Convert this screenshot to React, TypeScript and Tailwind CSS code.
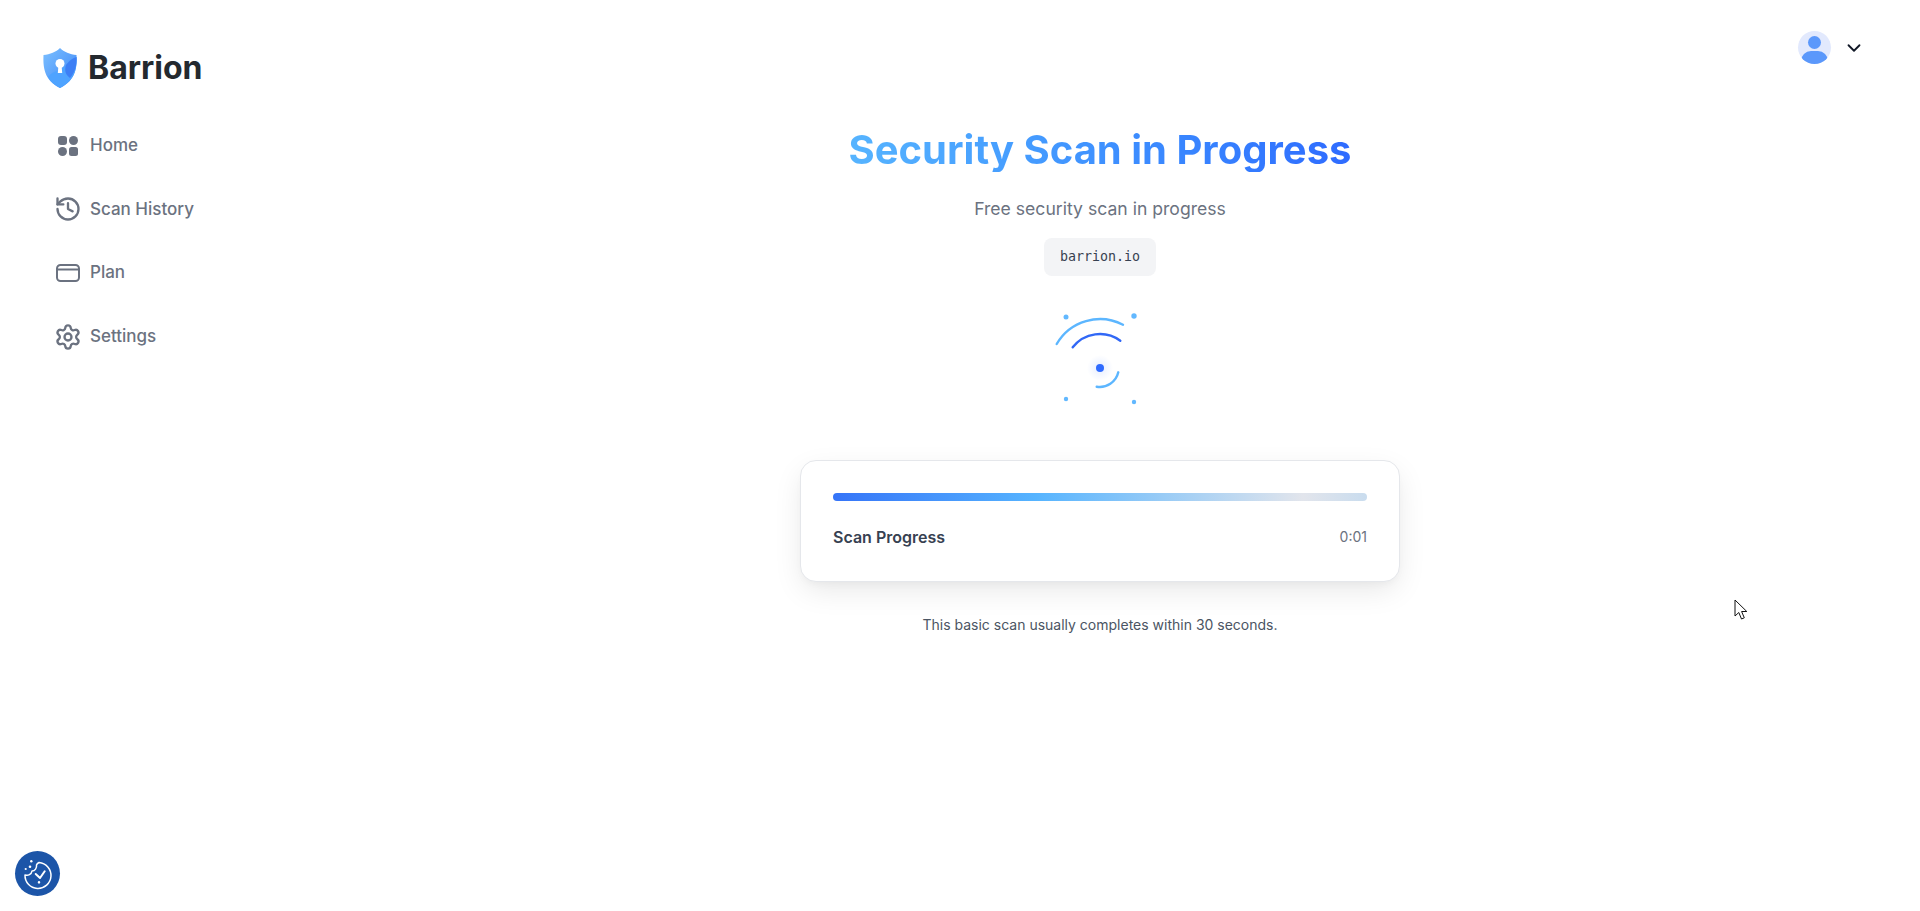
import { ChevronDown, History, Settings } from "lucide-react";

function ShieldLogo() {
    return (
        <svg width="36" height="42" viewBox="0 0 36 42" className="shrink-0">
            <defs>
                <linearGradient id="shieldFill" x1="0" y1="0" x2="1" y2="1">
                    <stop offset="0" stopColor="#7cc0ff" />
                    <stop offset="1" stopColor="#3d86f7" />
                </linearGradient>
            </defs>
            <path
                d="M18 1C14 5 8 7.5 1.5 8 1 20 2 33 18 41 34 33 35 20 34.500 8 28 7.500 22 5 18 1Z"
                fill="url(#shieldFill)"
            />
            <path d="M6 30C12 22 18 26 24 18 28 13 31 11 34.500 10 35 20 34 33 18 41 12 38 8 34 6 30Z" fill="#4ea3ff" />
            <path d="M24 18C28 13 31 11 34.500 10 35 18 33 25 28 31 24 28 22 24 24 18Z" fill="#3d7ff5" />
            <circle cx="18" cy="16.500" r="4.500" fill="#fff" />
            <path d="M16.500 18H19.500L20.200 26H15.800Z" fill="#fff" />
        </svg>
    );
}

function HomeIcon() {
    return (
        <svg width="28" height="28" viewBox="0 0 28 28" fill="#6b7280">
            <rect x="4" y="4" width="9" height="9" rx="3" />
            <circle cx="19.500" cy="8.500" r="4.500" />
            <circle cx="8.500" cy="19.500" r="4.500" />
            <rect x="15" y="15" width="9" height="9" rx="2.500" />
        </svg>
    );
}

function CardIcon() {
    return (
        <svg width="28" height="28" viewBox="0 0 28 28" fill="none" stroke="#6b7280" strokeWidth="2">
            <rect x="3" y="6" width="22" height="16" rx="3.500" />
            <path d="M3 10.500H25" />
        </svg>
    );
}

function ScanAnimation() {
    return (
        <svg width="100" height="100" viewBox="0 0 100 100" fill="none" strokeLinecap="round" className="mt-[34px]">
            <defs>
                <radialGradient id="dotGlow">
                    <stop offset="0" stopColor="#2f6bff" stopOpacity="0.12" />
                    <stop offset="1" stopColor="#2f6bff" stopOpacity="0" />
                </radialGradient>
            </defs>
            <circle cx="16" cy="7" r="2.500" fill="#62b8ff" />
            <circle cx="84" cy="6" r="2.700" fill="#62b8ff" />
            <circle cx="16" cy="89" r="2.200" fill="#62b8ff" />
            <circle cx="84" cy="92" r="2.200" fill="#62b8ff" />
            <path d="M6.700 34A50 50 0 0 1 73 14.700" stroke="#5cb6ff" strokeWidth="2.400" />
            <path d="M22.700 37.300A34.500 34.500 0 0 1 70.300 30.700" stroke="#3168f6" strokeWidth="2.400" />
            <path d="M68.300 62.300A19 19 0 0 1 46.700 76.700" stroke="#5cb6ff" strokeWidth="2.400" />
            <circle cx="50" cy="58" r="13" fill="url(#dotGlow)" />
            <circle cx="50" cy="58" r="4" fill="#2f6bff" />
        </svg>
    );
}

function CookieBadge() {
    return (
        <div className="absolute left-[15px] bottom-[15px] w-[45px] h-[45px] rounded-full bg-[#1c55a8] flex items-center justify-center">
            <svg width="32" height="32" viewBox="0 0 32 32" fill="none" stroke="#fff" strokeWidth="1.500" strokeLinecap="round" strokeLinejoin="round">
                <path d="M17 4.500A13 13 0 1 1 3 17C6 18 9.500 16.500 10 13 13 13 15 10 14.500 7 15 5.500 16 5 17 4.500Z" />
                <path d="M13.700 16L18 20 22.700 13.300" strokeWidth="2" />
                <path d="M17 24.300V24.400" strokeWidth="2.400" />
                <circle cx="9.300" cy="3.300" r="1.200" fill="#fff" stroke="none" />
                <circle cx="8" cy="8.700" r="1.300" fill="#fff" stroke="none" />
                <circle cx="3.700" cy="11" r="1.100" fill="#fff" stroke="none" />
            </svg>
        </div>
    );
}

function MouseCursor() {
    return (
        <svg width="14" height="22" viewBox="0 0 14 22" className="absolute left-[1734px] top-[599px]">
            <path d="M1 1V17L4.800 13.500 7.500 20 10.300 18.800 7.600 12.500H12.800Z" fill="#fff" stroke="#111" strokeWidth="1" strokeLinejoin="round" />
        </svg>
    );
}

const navItems = [
    { label: "Home", icon: <HomeIcon /> },
    { label: "Scan History", icon: <History size={28} strokeWidth={2} color="#6b7280" /> },
    { label: "Plan", icon: <CardIcon /> },
    { label: "Settings", icon: <Settings size={28} strokeWidth={2} color="#6b7280" /> },
];

export default function App() {
    return (
        <div className="relative flex h-screen overflow-hidden bg-white font-['Inter',sans-serif]">
            <aside className="w-[280px] shrink-0 flex flex-col">
                <div className="flex items-center gap-[10px] pl-[42px] pt-[47px]">
                    <ShieldLogo />
                    <span className="text-[32px] leading-[40px] font-bold text-[#24292f]">Barrion</span>
                </div>
                <nav className="mt-[25px] flex flex-col">
                    {navItems.map((item) => (
                        <a key={item.label} className="flex items-center gap-2 h-[63.600px] pl-[54px] text-[17px] text-[#6b7280] font-medium">
                            {item.icon}
                            <span>{item.label}</span>
                        </a>
                    ))}
                </nav>
            </aside>

            <main className="flex-1 flex flex-col">
                <header className="flex justify-end items-center gap-3 pt-[31px] pr-[55px] -mb-[65px]">
                    <div className="w-[33px] h-[33px] rounded-full bg-[#e2e9fd] overflow-hidden relative">
                        <div className="absolute left-[10px] top-[5px] w-[13px] h-[13px] rounded-full bg-[#5b98fb]" />
                        <div className="absolute left-[3px] top-[20px] w-[27px] h-[20px] rounded-full bg-[#5b98fb]" />
                    </div>
                    <ChevronDown size={22} color="#111827" />
                </header>

                <div className="flex flex-col items-center pt-[129px]">
                    <h1 className="inline-block text-[40px] leading-[44px] font-bold bg-linear-to-r from-[#56b4ff] to-[#2f6bff] bg-clip-text text-transparent">
                        Security Scan in Progress
                    </h1>
                    <p className="mt-[23px] text-[17.600px] leading-7 text-[#6b7280]">Free security scan in progress</p>
                    <div className="mt-[15px] h-[38px] px-4 flex items-center rounded-lg bg-[#f3f4f6] font-['DejaVu_Sans_Mono',monospace] text-[13.300px] text-[#374151]">
                        barrion.io
                    </div>
                    <ScanAnimation />
                    <div className="mt-[50px] w-[600px] rounded-2xl border border-[#e5e7eb] bg-white p-8 shadow-[0_10px_30px_-3px_rgba(0,0,0,0.1),0_4px_10px_-4px_rgba(0,0,0,0.05)]">
                        <div className="h-2 rounded-full bg-[linear-gradient(90deg,#3574f8_0%,#56b4ff_38%,#e2e5ec_88%,#c9dcee_100%)]" />
                        <div className="mt-6 flex justify-between items-center">
                            <span className="font-semibold text-base text-[#374151]">Scan Progress</span>
                            <span className="text-sm text-[#6b7280]">0:01</span>
                        </div>
                    </div>
                    <p className="mt-[33px] text-sm text-[#4b5563]">This basic scan usually completes within 30 seconds.</p>
                </div>
            </main>

            <CookieBadge />
            <MouseCursor />
        </div>
    );
}
